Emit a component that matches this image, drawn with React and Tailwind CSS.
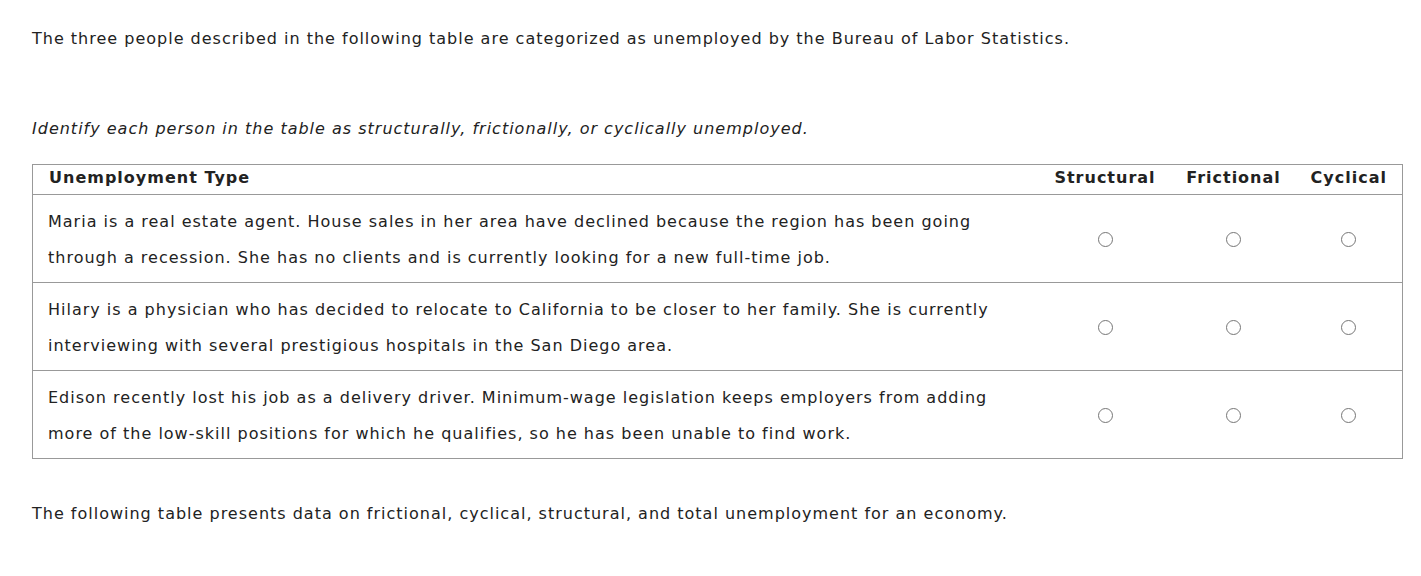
const rows = [
  [
    "Maria is a real estate agent. House sales in her area have declined because the region has been going",
    "through a recession. She has no clients and is currently looking for a new full-time job.",
  ],
  [
    "Hilary is a physician who has decided to relocate to California to be closer to her family. She is currently",
    "interviewing with several prestigious hospitals in the San Diego area.",
  ],
  [
    "Edison recently lost his job as a delivery driver. Minimum-wage legislation keeps employers from adding",
    "more of the low-skill positions for which he qualifies, so he has been unable to find work.",
  ],
];

function Radio() {
  return <span className="inline-block w-[15px] h-[15px] rounded-full border border-[#767676] bg-white align-middle"></span>;
}

export default function App() {
  return (
    <div className="min-h-screen bg-white text-[#222] text-[16px] tracking-[1px] px-[32px] pt-[28px] font-['DejaVu_Sans',Verdana,sans-serif]">
      <p className="leading-[22px]">
        The three people described in the following table are categorized as unemployed by the Bureau of Labor Statistics.
      </p>
      <p className="mt-[68px] italic leading-[22px]">
        Identify each person in the table as structurally, frictionally, or cyclically unemployed.
      </p>
      <table className="mt-[24px] w-[1371px] table-fixed border-collapse border border-[#999]">
        <thead>
          <tr className="h-[30px] border-b border-[#999]">
            <th className="text-left font-bold px-[16px] pb-[3px]">Unemployment Type</th>
            <th className="font-bold px-0 pb-[3px] w-[133px] whitespace-nowrap">Structural</th>
            <th className="font-bold px-0 pb-[3px] w-[124px] whitespace-nowrap">Frictional</th>
            <th className="font-bold px-0 pb-[3px] w-[107px] whitespace-nowrap">Cyclical</th>
          </tr>
        </thead>
        <tbody>
          {rows.map((r, i) => (
            <tr key={i} className="h-[88px] border-b border-[#999]">
              <td className="px-[15px] pt-[2px] leading-[36px]">
                {r[0]}
                <br />
                {r[1]}
              </td>
              <td className="text-center"><Radio /></td>
              <td className="text-center"><Radio /></td>
              <td className="text-center"><Radio /></td>
            </tr>
          ))}
        </tbody>
      </table>
      <p className="mt-[44px] leading-[22px]">
        The following table presents data on frictional, cyclical, structural, and total unemployment for an economy.
      </p>
    </div>
  );
}
